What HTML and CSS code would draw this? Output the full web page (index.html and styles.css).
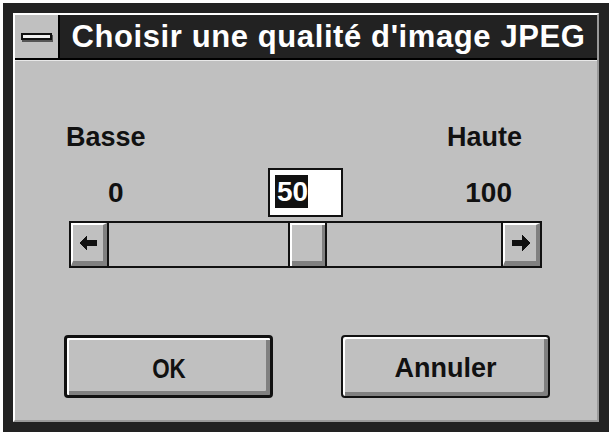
FILE: index.html
```html
<!DOCTYPE html>
<html lang="fr">
<head>
<meta charset="utf-8">
<title>Choisir une qualité d'image JPEG</title>
<link rel="stylesheet" href="styles.css">
</head>
<body>
<div class="window">
  <div class="inner">
    <div class="titlebar">
      <div class="sysmenu"><span class="sysbar"></span></div>
      <div class="title">Choisir une qualité d'image JPEG</div>
    </div>
    <div class="client">
      <div class="slider-block">
        <div class="labels"><span>Basse</span><span>Haute</span></div>
        <div class="nums">
          <span class="min">0</span>
          <div class="edit"><span class="sel">50</span></div>
          <span class="max">100</span>
        </div>
        <div class="scrollbar">
          <div class="arrow">
            <svg width="18" height="16" viewBox="0 0 18 16" shape-rendering="crispEdges"><polygon points="0,8 8,0 8,5 18,5 18,11 8,11 8,16" fill="#111"/></svg>
          </div>
          <div class="track"><div class="thumb"></div></div>
          <div class="arrow arrow-right">
            <svg width="18" height="16" viewBox="0 0 18 16" shape-rendering="crispEdges"><polygon points="18,8 10,0 10,5 0,5 0,11 10,11 10,16" fill="#111"/></svg>
          </div>
        </div>
      </div>
      <div class="buttons">
        <button class="btn btn-default"><span class="narrow">OK</span></button>
        <button class="btn">Annuler</button>
      </div>
    </div>
  </div>
</div>
</body>
</html>
```
FILE: styles.css
```css
html, body {
  margin: 0;
  background: #fff;
}
body {
  font-family: "Liberation Sans", Arial, sans-serif;
  font-weight: bold;
  color: #111;
}
.window {
  margin: 3px;
  width: 606px;
  height: 429px;
  box-sizing: border-box;
  background: #222;
  padding: 10px;
}
.inner {
  height: 100%;
  box-sizing: border-box;
  border: 2px solid;
  border-color: #fff #9a9a9a #9a9a9a #fff;
  display: flex;
  flex-direction: column;
  background: #c0c0c0;
}
.titlebar {
  height: 43px;
  flex: none;
  display: flex;
  background: #222;
  border-bottom: 2px solid #000;
}
.sysmenu {
  width: 43px;
  border-right: 2px solid #000;
  background: #c0c0c0;
  display: flex;
  align-items: center;
  justify-content: center;
}
.sysbar {
  width: 31px;
  height: 7px;
  box-sizing: border-box;
  border: 2px solid #111;
  background: #f0f0f0;
  box-shadow: 1px 2px 0 #555;
}
.title {
  flex: 1;
  color: #fff;
  display: flex;
  align-items: center;
  justify-content: center;
  font-size: 31px;
  letter-spacing: 0.6px;
  white-space: nowrap;
}
.client {
  flex: 1;
  border-top: 1px solid #e8e8e8;
  padding-top: 60px;
}
.slider-block {
  margin-left: 54px;
  width: 473px;
}
.labels {
  display: flex;
  justify-content: space-between;
  font-size: 27px;
  line-height: 32px;
  margin-left: -3px;
  padding-right: 20px;
}
.nums {
  display: grid;
  grid-template-columns: 1fr 75px 1fr;
  align-items: center;
  margin-top: 15px;
  font-size: 28px;
}
.min {
  justify-self: start;
  margin-left: 39px;
}
.max {
  justify-self: end;
  margin-right: 30px;
}
.edit {
  height: 49px;
  box-sizing: border-box;
  border: 2px solid #111;
  background: #fff;
  padding: 5px 0 0 5px;
}
.sel {
  display: block;
  width: 33px;
  height: 33px;
  box-sizing: border-box;
  padding-left: 2px;
  background: #111;
  color: #fff;
  line-height: 33px;
  overflow: hidden;
  white-space: nowrap;
}
.scrollbar {
  margin-top: 4px;
  height: 47px;
  box-sizing: border-box;
  border: 2px solid #111;
  display: flex;
  background: #c0c0c0;
}
.arrow {
  width: 36px;
  box-sizing: border-box;
  border-style: solid;
  border-width: 2px 4px 5px 2px;
  border-color: #fff #808080 #808080 #fff;
  display: flex;
  align-items: center;
  justify-content: center;
}
.arrow-right {
  width: 37px;
}
.track {
  flex: 1;
  border-left: 2px solid #111;
  border-right: 2px solid #111;
  display: flex;
  justify-content: center;
}
.thumb {
  width: 35px;
  margin-left: 5px;
  border-left: 2px solid #111;
  border-right: 2px solid #111;
  background: #c0c0c0;
  box-shadow: inset 2px 2px 0 #fff, inset -3px -5px 0 #808080;
}
.buttons {
  display: flex;
  margin-top: 67px;
  padding-left: 49px;
  gap: 68px;
}
.btn {
  width: 209px;
  height: 63px;
  box-sizing: border-box;
  padding: 4px 0 0;
  font-family: inherit;
  font-weight: bold;
  font-size: 27px;
  color: #111;
  background: #c0c0c0;
  border: 2px solid #111;
  border-radius: 4px;
  box-shadow: inset 2px 2px 0 #fff, inset -4px -4px 0 #808080;
}
.btn-default {
  border-width: 3px;
}
.narrow {
  display: inline-block;
  font-size: 28px;
  transform: scaleX(0.8);
}
```
